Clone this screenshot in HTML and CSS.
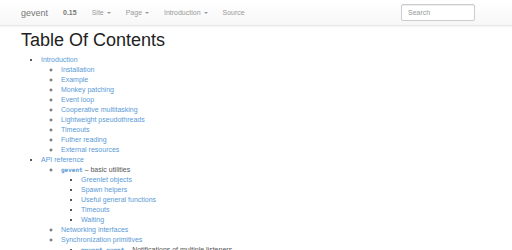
FILE: index.html
```html
<!DOCTYPE html>
<html lang="en">
<head>
    <meta charset="UTF-8">
    <meta name="viewport" content="width=device-width, initial-scale=1.0">
    <title>Table Of Contents &mdash; gevent 0.15</title>
    <link rel="stylesheet" href="styles.css">
</head>
<body>
    <div class="navbar">
        <div class="navbar-inner">
            <a class="brand" href="#">gevent</a>
            <span class="version">0.15</span>
            <ul class="nav">
                <li><a href="#">Site <b class="caret"></b></a></li>
                <li><a href="#">Page <b class="caret"></b></a></li>
                <li><a href="#">Introduction <b class="caret"></b></a></li>
                <li><a href="#">Source</a></li>
            </ul>
            <form class="navbar-form">
                <input type="text" class="search" placeholder="Search">
            </form>
        </div>
    </div>

    <div class="container">
        <h1>Table Of Contents</h1>
        <ul class="toc">
            <li><a href="#">Introduction</a>
                <ul>
                    <li><a href="#">Installation</a></li>
                    <li><a href="#">Example</a></li>
                    <li><a href="#">Monkey patching</a></li>
                    <li><a href="#">Event loop</a></li>
                    <li><a href="#">Cooperative multitasking</a></li>
                    <li><a href="#">Lightweight pseudothreads</a></li>
                    <li><a href="#">Timeouts</a></li>
                    <li><a href="#">Futher reading</a></li>
                    <li><a href="#">External resources</a></li>
                </ul>
            </li>
            <li><a href="#">API reference</a>
                <ul>
                    <li><a href="#"><code>gevent</code></a> &ndash; basic utilities
                        <ul>
                            <li><a href="#">Greenlet objects</a></li>
                            <li><a href="#">Spawn helpers</a></li>
                            <li><a href="#">Useful general functions</a></li>
                            <li><a href="#">Timeouts</a></li>
                            <li><a href="#">Waiting</a></li>
                        </ul>
                    </li>
                    <li><a href="#">Networking interfaces</a></li>
                    <li><a href="#">Synchronization primitives</a>
                        <ul>
                            <li><a href="#"><code>gevent.event</code></a> &ndash; Notifications of multiple listeners</li>
                        </ul>
                    </li>
                </ul>
            </li>
        </ul>
    </div>
</body>
</html>
```

FILE: styles.css
```css
body {
    margin: 0;
    font-family: "Liberation Sans", Arial, sans-serif;
    font-size: 7px;
    line-height: 10px;
    color: #555;
    background-color: #fff;
}
a {
    color: #5a9ad6;
    text-decoration: none;
}
.navbar {
    height: 25px;
    background-image: linear-gradient(to bottom, #fff 0, #f7f7f7 100%);
    border-bottom: 1px solid #e7e7e7;
    box-shadow: 0 1px 2px rgba(0,0,0,0.05);
}
.navbar-inner {
    display: flex;
    align-items: center;
    height: 25px;
    padding: 0 37px 0 21px;
}
.brand {
    font-size: 9px;
    color: #777;
    margin-right: 15px;
}
.version {
    font-weight: bold;
    color: #777;
    margin-right: 15px;
}
.nav {
    display: flex;
    list-style: none;
    margin: 0;
    padding: 0;
    flex: 1;
}
.nav li a {
    display: block;
    color: #999;
    padding: 0 15px 0 0;
}
.caret {
    display: inline-block;
    width: 0;
    height: 0;
    margin-left: 1px;
    vertical-align: middle;
    border-top: 2px solid #999;
    border-right: 2px solid transparent;
    border-left: 2px solid transparent;
}
.navbar-form {
    margin: 0;
}
.search {
    box-sizing: border-box;
    width: 74px;
    height: 17px;
    padding: 0 6px;
    font-family: "Liberation Sans", Arial, sans-serif;
    font-size: 7px;
    color: #555;
    border: 1px solid #ccc;
    border-radius: 2px;
    box-shadow: inset 0 1px 1px rgba(0,0,0,0.075);
}
.search::placeholder {
    color: #999;
}
.container {
    padding: 0 21px;
}
h1 {
    font-family: "Liberation Sans", Arial, sans-serif;
    font-weight: 500;
    font-size: 18px;
    line-height: 1.1;
    color: #222;
    margin: 5px 0 4px;
}
.toc > li {
    color: #222;
}
.toc ul {
    color: #555;
}
ul {
    margin: 0;
    padding-left: 20px;
}
code {
    font-family: "DejaVu Sans Mono", monospace;
    font-weight: bold;
    font-size: 6px;
}
```
